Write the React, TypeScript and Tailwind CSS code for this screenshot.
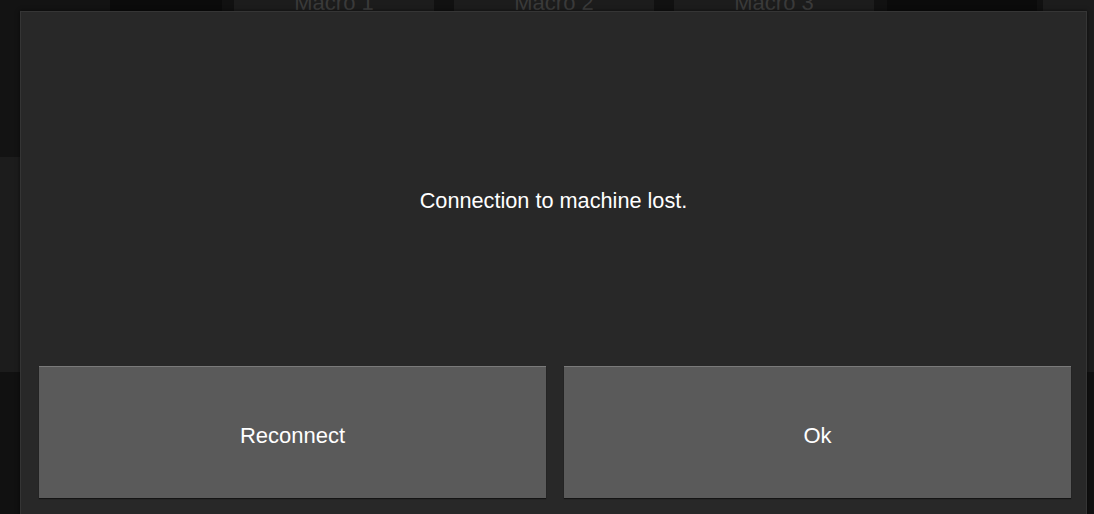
export default function App() {
  const macros = ['Macro 1', 'Macro 2', 'Macro 3'];

  return (
    <div className="relative h-[514px] w-[1094px] overflow-hidden bg-[#111111] font-['Liberation_Sans',Arial,sans-serif]">
      {/* Background app (mostly hidden by the dialog) */}
      <div className="flex h-[157px] items-start">
        <div className="h-full w-[110px] bg-[#131313]" />
        <div className="h-full w-[112px] bg-[#0b0b0b]" />
        <div className="ml-[12px] flex gap-[20px]">
          {macros.map((m) => (
            <div
              key={m}
              className="flex h-[40px] w-[200px] -translate-y-[21px] items-end justify-center bg-[#1c1c1c] text-[22px] text-[#3a3a3a]"
            >
              {m}
            </div>
          ))}
        </div>
        <div className="ml-[13px] h-full w-[150px] bg-[#0b0b0b]" />
        <div className="ml-[6px] h-full flex-1 bg-[#1c1c1c]" />
      </div>
      <div className="h-[215px] bg-[#1c1c1c]" />
      <div className="h-[142px] bg-[#111111]" />

      {/* Modal dialog */}
      <div className="absolute left-[20px] top-[11px] flex h-[520px] w-[1067px] flex-col border border-[#353535] bg-[#282828] shadow-[0_0_4px_rgba(0,0,0,0.6)]">
        <div className="flex h-[354px] items-center justify-center pt-[24px] text-[21.7px] text-white">
          Connection to machine lost.
        </div>
        <div className="flex gap-[18px] pl-[18px] pr-[15px]">
          <button className="flex h-[132px] flex-1 items-center justify-center border-t border-[#7a7a7a] bg-[#5a5a5a] pt-[6px] text-[22px] text-white shadow-[0_1px_1px_rgba(0,0,0,0.5)]">
            Reconnect
          </button>
          <button className="flex h-[132px] flex-1 items-center justify-center border-t border-[#7a7a7a] bg-[#5a5a5a] pt-[6px] text-[22px] text-white shadow-[0_1px_1px_rgba(0,0,0,0.5)]">
            Ok
          </button>
        </div>
      </div>
    </div>
  );
}
